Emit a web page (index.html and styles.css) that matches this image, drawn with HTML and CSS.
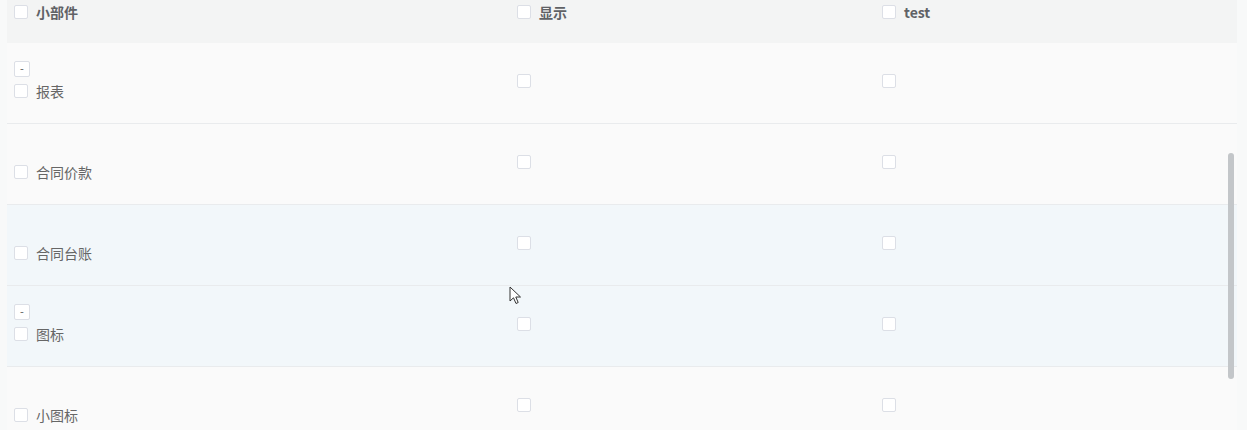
FILE: index.html
```html
<!DOCTYPE html>
<html lang="zh">
<head>
    <meta charset="UTF-8">
    <meta name="viewport" content="width=device-width, initial-scale=1">
    <title>小部件权限</title>
    <link rel="stylesheet" href="styles.css">
</head>
<body>
    <div class="page">
        <div class="table">
            <div class="row head">
                <div class="cell col-name"><span class="check"></span><span class="label">小部件</span></div>
                <div class="cell col-show"><span class="check"></span><span class="label">显示</span></div>
                <div class="cell col-test"><span class="check"></span><span class="label">test</span></div>
            </div>

            <div class="row">
                <div class="cell col-name">
                    <div class="tree">
                        <span class="toggle">-</span>
                        <div class="line"><span class="check"></span><span class="label">报表</span></div>
                    </div>
                </div>
                <div class="cell col-show"><span class="check"></span></div>
                <div class="cell col-test"><span class="check"></span></div>
            </div>

            <div class="row">
                <div class="cell col-name">
                    <div class="tree">
                        <span class="toggle hidden">-</span>
                        <div class="line"><span class="check"></span><span class="label">合同价款</span></div>
                    </div>
                </div>
                <div class="cell col-show"><span class="check"></span></div>
                <div class="cell col-test"><span class="check"></span></div>
            </div>

            <div class="row active">
                <div class="cell col-name">
                    <div class="tree">
                        <span class="toggle hidden">-</span>
                        <div class="line"><span class="check"></span><span class="label">合同台账</span></div>
                    </div>
                </div>
                <div class="cell col-show"><span class="check"></span></div>
                <div class="cell col-test"><span class="check"></span></div>
            </div>

            <div class="row active">
                <div class="cell col-name">
                    <div class="tree">
                        <span class="toggle">-</span>
                        <div class="line"><span class="check"></span><span class="label">图标</span></div>
                    </div>
                </div>
                <div class="cell col-show"><span class="check"></span></div>
                <div class="cell col-test"><span class="check"></span></div>
            </div>

            <div class="row">
                <div class="cell col-name">
                    <div class="tree">
                        <span class="toggle hidden">-</span>
                        <div class="line"><span class="check"></span><span class="label">小图标</span></div>
                    </div>
                </div>
                <div class="cell col-show"><span class="check"></span></div>
                <div class="cell col-test"><span class="check"></span></div>
            </div>
        </div>

        <!-- 滚动条 -->
        <div class="scroll-thumb"></div>

        <!-- 鼠标指针 -->
        <svg class="cursor" width="14" height="20" viewBox="0 0 14 20">
            <path d="M1 1 L1 15 L4.5 11.8 L7 17.5 L9.2 16.5 L6.8 11 L11.5 11 Z" fill="#fff" stroke="#333" stroke-width="1" stroke-linejoin="round"/>
        </svg>
    </div>
</body>
</html>
```

FILE: styles.css
```css
body {
    font-family: "Noto Sans CJK SC", "Noto Sans", sans-serif;
    font-size: 14px;
    color: #666;
    margin: 0;
    padding: 0;
    background-color: #f8f9f9;
}

.page {
    position: relative;
    height: 430px;
    overflow: hidden;
    padding-left: 7px;
}

.table {
    width: 1230px;
    background-color: #fafafa;
}

.row {
    display: flex;
    height: 81px;
    box-sizing: border-box;
    border-bottom: 1px solid #e9ebed;
    padding-bottom: 4px;
    align-items: center;
}

.row.active {
    background-color: #f2f7fa;
}

.row.head {
    height: 43px;
    align-items: flex-start;
    padding: 2px 0 0;
    background-color: #f3f4f4;
    border-bottom: none;
}

.cell {
    display: flex;
    align-items: center;
    box-sizing: border-box;
    padding-left: 7px;
}

.col-name {
    width: 503px;
}

.col-show {
    width: 365px;
}

.col-test {
    flex: 1;
}

.head .cell {
    height: 20px;
}

.head .label {
    font-weight: bold;
    color: #606266;
}

.check {
    display: inline-block;
    width: 12px;
    height: 12px;
    border: 1px solid #dcdfe6;
    border-radius: 2px;
    background-color: #fff;
}

.label {
    margin-left: 8px;
    line-height: 20px;
}

.tree {
    display: flex;
    flex-direction: column;
    align-items: flex-start;
    gap: 4px;
}

.line {
    display: flex;
    align-items: center;
    height: 20px;
}

.toggle {
    width: 14px;
    height: 14px;
    border: 1px solid #dcdfe6;
    border-radius: 2px;
    background-color: #fff;
    font-size: 11px;
    line-height: 13px;
    text-align: center;
    color: #555;
}

.toggle.hidden {
    visibility: hidden;
}

.scroll-thumb {
    position: absolute;
    left: 1228px;
    top: 153px;
    width: 6px;
    height: 226px;
    border-radius: 3px;
    background-color: #c3c6c9;
}

.cursor {
    position: absolute;
    left: 509px;
    top: 286px;
}
```
